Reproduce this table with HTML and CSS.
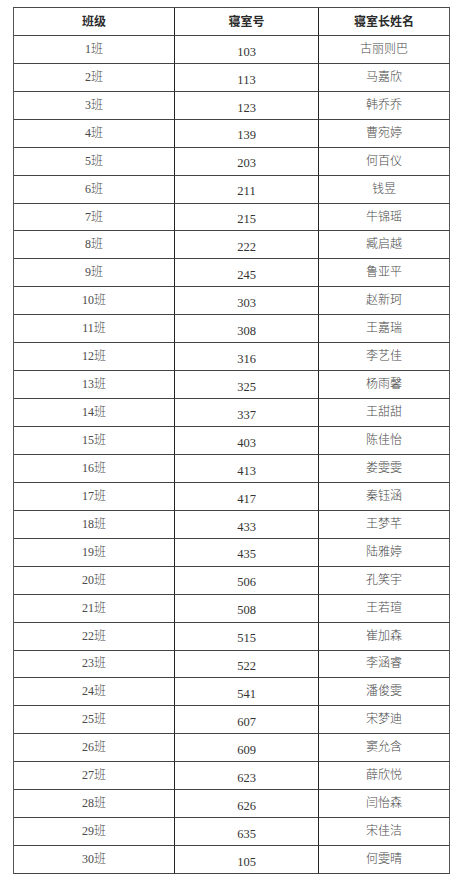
FILE: index.html
```
<!DOCTYPE html>
<html lang="zh-CN">
<head>
<meta charset="utf-8">
<title>寝室长名单</title>
<link rel="stylesheet" href="styles.css">
</head>
<body>
<div class="sheet">
  <div class="cell head c1">班级</div><div class="cell head c2">寝室号</div><div class="cell head c3">寝室长姓名</div>
  <div class="cell c1">1班</div><div class="cell c2 num">103</div><div class="cell c3">古丽则巴</div>
  <div class="cell c1">2班</div><div class="cell c2 num">113</div><div class="cell c3">马嘉欣</div>
  <div class="cell c1">3班</div><div class="cell c2 num">123</div><div class="cell c3">韩乔乔</div>
  <div class="cell c1">4班</div><div class="cell c2 num">139</div><div class="cell c3">曹宛婷</div>
  <div class="cell c1">5班</div><div class="cell c2 num">203</div><div class="cell c3">何百仪</div>
  <div class="cell c1">6班</div><div class="cell c2 num">211</div><div class="cell c3">钱昱</div>
  <div class="cell c1">7班</div><div class="cell c2 num">215</div><div class="cell c3">牛锦瑶</div>
  <div class="cell c1">8班</div><div class="cell c2 num">222</div><div class="cell c3">臧启越</div>
  <div class="cell c1">9班</div><div class="cell c2 num">245</div><div class="cell c3">鲁亚平</div>
  <div class="cell c1">10班</div><div class="cell c2 num">303</div><div class="cell c3">赵新珂</div>
  <div class="cell c1">11班</div><div class="cell c2 num">308</div><div class="cell c3">王嘉瑞</div>
  <div class="cell c1">12班</div><div class="cell c2 num">316</div><div class="cell c3">李艺佳</div>
  <div class="cell c1">13班</div><div class="cell c2 num">325</div><div class="cell c3">杨雨馨</div>
  <div class="cell c1">14班</div><div class="cell c2 num">337</div><div class="cell c3">王甜甜</div>
  <div class="cell c1">15班</div><div class="cell c2 num">403</div><div class="cell c3">陈佳怡</div>
  <div class="cell c1">16班</div><div class="cell c2 num">413</div><div class="cell c3">娄雯雯</div>
  <div class="cell c1">17班</div><div class="cell c2 num">417</div><div class="cell c3">秦钰涵</div>
  <div class="cell c1">18班</div><div class="cell c2 num">433</div><div class="cell c3">王梦芊</div>
  <div class="cell c1">19班</div><div class="cell c2 num">435</div><div class="cell c3">陆雅婷</div>
  <div class="cell c1">20班</div><div class="cell c2 num">506</div><div class="cell c3">孔笑宇</div>
  <div class="cell c1">21班</div><div class="cell c2 num">508</div><div class="cell c3">王若瑄</div>
  <div class="cell c1">22班</div><div class="cell c2 num">515</div><div class="cell c3">崔加森</div>
  <div class="cell c1">23班</div><div class="cell c2 num">522</div><div class="cell c3">李涵睿</div>
  <div class="cell c1">24班</div><div class="cell c2 num">541</div><div class="cell c3">潘俊雯</div>
  <div class="cell c1">25班</div><div class="cell c2 num">607</div><div class="cell c3">宋梦迪</div>
  <div class="cell c1">26班</div><div class="cell c2 num">609</div><div class="cell c3">窦允含</div>
  <div class="cell c1">27班</div><div class="cell c2 num">623</div><div class="cell c3">薛欣悦</div>
  <div class="cell c1">28班</div><div class="cell c2 num">626</div><div class="cell c3">闫怡森</div>
  <div class="cell c1">29班</div><div class="cell c2 num">635</div><div class="cell c3">宋佳洁</div>
  <div class="cell c1">30班</div><div class="cell c2 num">105</div><div class="cell c3">何雯晴</div>
</div>
</body>
</html>
```
FILE: styles.css
```
html, body {
  margin: 0;
  padding: 0;
  background: #ffffff;
}
body {
  padding: 7px 0 0 13px;
}
.sheet {
  box-sizing: border-box;
  width: 437px;
  height: 867px;
  display: grid;
  grid-template-columns: 161px 144px 131px;
  grid-template-rows: repeat(31, 1fr);
  border-top: 1px solid #4a4a4a;
  border-left: 1px solid #555555;
}
.cell {
  display: flex;
  align-items: center;
  justify-content: center;
  border-bottom: 1px solid #444444;
  border-right: 1px solid #222222;
  font-family: "Liberation Serif", "Noto Sans CJK SC", serif;
  font-size: 12px;
  font-weight: 300;
  color: #4a4a4a;
  line-height: 1;
  padding-bottom: 1px;
}
.c3 {
  border-right-color: #555555;
}
.num {
  padding-top: 5px;
  padding-bottom: 0;
  color: #333333;
  font-size: 12.5px;
}
.head {
  font-family: "Noto Sans CJK SC", sans-serif;
  font-weight: 700;
  color: #2a2a2a;
  padding-top: 0;
}
```
